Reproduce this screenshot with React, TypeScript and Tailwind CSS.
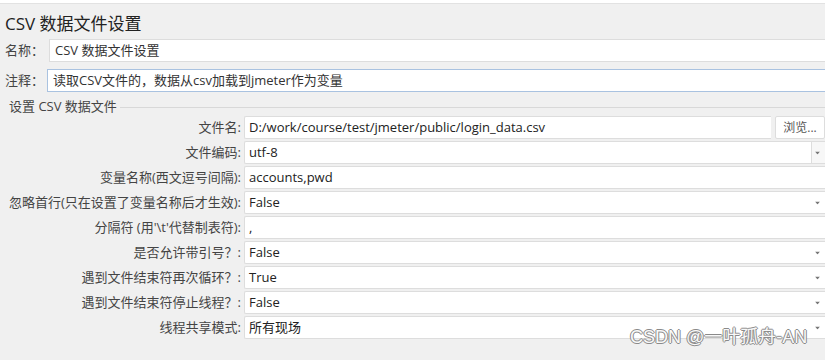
import React from 'react';

const rows = [
  { label: '文件名:', value: 'D:/work/course/test/jmeter/public/login_data.csv', kind: 'browse' },
  { label: '文件编码:', value: 'utf-8', kind: 'combo' },
  { label: '变量名称(西文逗号间隔):', value: 'accounts,pwd', kind: 'text' },
  { label: '忽略首行(只在设置了变量名称后才生效):', value: 'False', kind: 'select' },
  { label: "分隔符 (用'\\t'代替制表符):", value: ',', kind: 'text' },
  { label: '是否允许带引号？:', value: 'False', kind: 'select' },
  { label: '遇到文件结束符再次循环？:', value: 'True', kind: 'select' },
  { label: '遇到文件结束符停止线程？:', value: 'False', kind: 'select' },
  { label: '线程共享模式:', value: '所有现场', kind: 'select' },
];

const Arrow = () => (
  <svg className="absolute right-[5px] top-1/2 -translate-y-1/2" width="5" height="3" viewBox="0 0 5 3">
    <polygon points="0,0 5,0 2.5,3" fill="#777" />
  </svg>
);

const CsvDataSetConfig: React.FC = () => {
  return (
    <div
      className="relative w-[825px] h-[360px] overflow-hidden bg-[#f0f0f0] text-[#333] border-t border-[#e2e2e2] mt-[3px]"
      style={{ fontFamily: '"Open Sans", "Noto Sans CJK SC", sans-serif' }}
    >
      <h1 className="pl-[5px] pt-[8px] h-[34px] text-[17px] leading-[24px] text-[#222]">CSV 数据文件设置</h1>

      <div className="flex items-center h-[25px]">
        <span className="w-[49px] pl-[5px] text-[13px] text-[#444]">名称：</span>
        <div className="flex-1 h-[23px] bg-white border border-[#ddd] border-r-0 pl-[5px] text-[13px] leading-[21px]">CSV 数据文件设置</div>
      </div>
      <div className="flex items-center h-[25px] mt-[5px]">
        <span className="w-[47px] pl-[5px] text-[13px] text-[#444]">注释：</span>
        <div className="flex-1 h-[23px] bg-white border border-[#a9c2e0] border-r-0 pl-[5px] text-[13px] leading-[21px]">读取CSV文件的，数据从csv加载到jmeter作为变量</div>
      </div>

      <div className="flex items-center h-[16px] mt-[6px] pl-[9px]">
        <span className="text-[13px] text-[#444] pr-[3px]">设置 CSV 数据文件</span>
        <div className="flex-1 border-t border-[#d8d8d8]" />
      </div>

      <div className="grid grid-cols-[241px_1fr] gap-x-[3px] gap-y-[2px] mt-[1px]">
        {rows.map((r) => (
          <React.Fragment key={r.label}>
            <div className="h-[23px] flex items-center justify-end text-[13px] text-[#444] whitespace-nowrap">{r.label}</div>
            <div className="flex h-[23px] gap-[4px]">
              <div className="relative flex-1 bg-white border border-[#ddd] border-r-0 rounded-l-[2px] pl-[4px] text-[13px] leading-[21px] text-[#222]">
                {r.value}
                {r.kind === 'combo' && (
                  <div className="absolute right-0 top-0 bottom-0 w-[14px] border-l border-[#ddd] bg-[#f7f7f7]">
                    <Arrow />
                  </div>
                )}
                {r.kind === 'select' && <Arrow />}
              </div>
              {r.kind === 'browse' && (
                <button className="w-[50px] h-[23px] bg-white border border-[#ddd] rounded-[2px] text-[12px] text-[#555]">浏览...</button>
              )}
            </div>
          </React.Fragment>
        ))}
      </div>

      <div
        className="absolute left-[630px] top-[320px] text-[18px] leading-[26px] text-[#f8f8f8] whitespace-nowrap [text-shadow:1px_0_0_#8a8a8a,-1px_0_0_#8a8a8a,0_1px_0_#8a8a8a,0_-1px_0_#8a8a8a]"
        style={{ fontFamily: '"Liberation Sans", "Noto Sans CJK SC", sans-serif' }}
      >
        CSDN @一叶孤舟-AN
      </div>
    </div>
  );
};

export default function App() {
  return <CsvDataSetConfig />;
}
